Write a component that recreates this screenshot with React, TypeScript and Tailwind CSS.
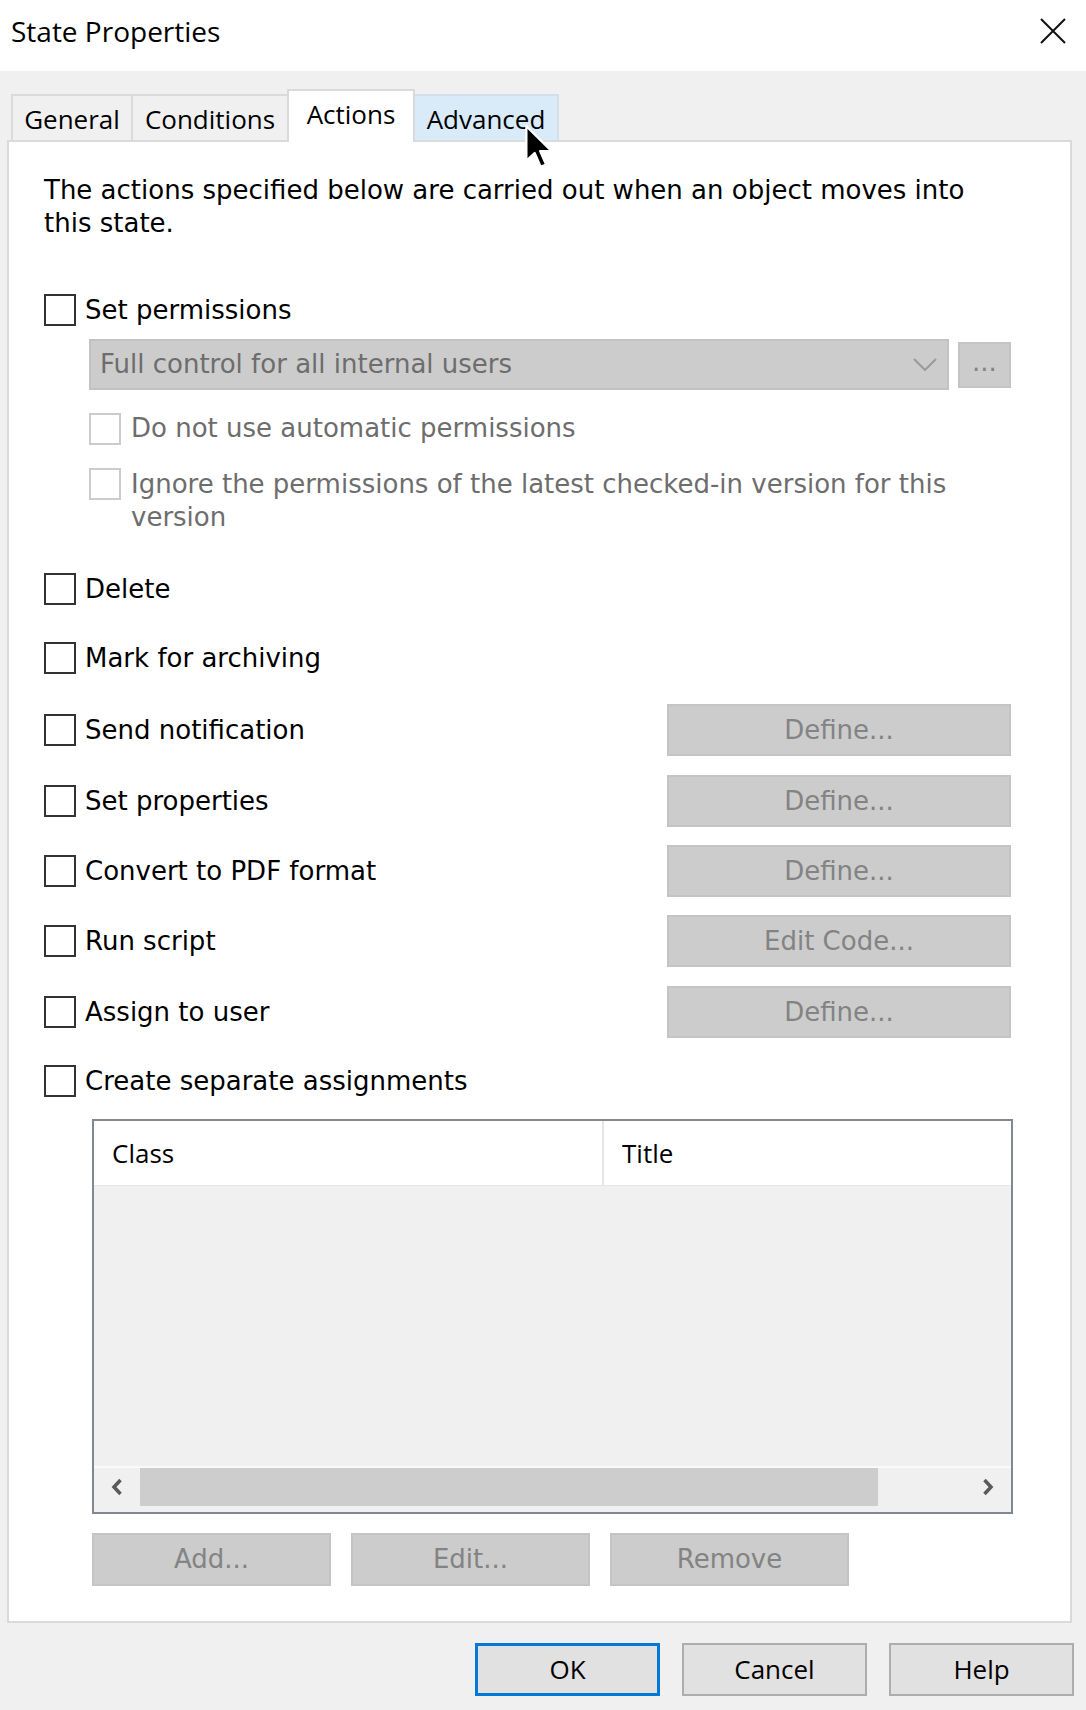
import clsx from "clsx";
import type { ReactNode } from "react";

const ui = "font-['Open_Sans','Noto_Sans',sans-serif]";
const body = "font-['DejaVu_Sans','Liberation_Sans',sans-serif]";

function Checkbox({ disabled = false }: { disabled?: boolean }) {
  return (
    <span
      className={clsx(
        "box-border block size-[32px] shrink-0 border-2 bg-white",
        disabled ? "border-[#cccccc]" : "border-[#333333]",
      )}
    />
  );
}

function DisabledButton({ children, className }: { children: ReactNode; className?: string }) {
  return (
    <div
      className={clsx(
        "box-border flex items-center justify-center border-2 border-[#c4c4c4] bg-[#cccccc] text-[26px] text-[#838383]",
        body,
        className,
      )}
    >
      {children}
    </div>
  );
}

function ActionRow({
  label,
  button,
  className,
}: {
  label: string;
  button?: string;
  className?: string;
}) {
  return (
    <div className={clsx("flex h-[52px] items-center", className)}>
      <Checkbox />
      <span className="ml-[9px] flex-1 text-[26px] text-black">{label}</span>
      {button && <DisabledButton className="h-[52px] w-[344px]">{button}</DisabledButton>}
    </div>
  );
}

function DialogButton({ children, primary = false }: { children: ReactNode; primary?: boolean }) {
  return (
    <div
      className={clsx(
        "box-border flex h-[53px] w-[185px] items-center justify-center bg-[#e1e1e1] text-[26px] text-black",
        ui,
        primary ? "border-[3px] border-[#0078d7]" : "border-2 border-[#adadad]",
      )}
    >
      {children}
    </div>
  );
}

function Chevron({ dir }: { dir: "left" | "right" }) {
  return (
    <svg viewBox="0 0 12 18" className="h-[18px] w-[12px]" fill="none">
      <path
        d={dir === "left" ? "M9.5 2 3 9l6.5 7" : "M2.5 2 9 9l-6.5 7"}
        stroke="#5a5a5a"
        strokeWidth="3.5"
      />
    </svg>
  );
}

export default function App() {
  return (
    <div className={clsx("relative h-[1710px] w-[1086px] overflow-hidden bg-[#f0f0f0]", body)}>
      {/* title bar */}
      <div className="flex h-[71px] items-center justify-between bg-white pb-[9px] pl-[11px] pr-[20px]">
        <span className={clsx("text-[28px] text-black", ui)}>State Properties</span>
        <svg viewBox="0 0 26 26" className="size-[26px]" fill="none">
          <path d="M1 1l24 24M25 1 1 25" stroke="#111" strokeWidth="2" />
        </svg>
      </div>

      <div className="pl-[7px] pr-[14px]">
        {/* tabs */}
        <div className={clsx("flex items-end pl-[4px] pt-[18px] text-[26px] text-black", ui)}>
          <div className="box-border flex h-[46px] w-[122px] items-center justify-center border-2 border-b-0 border-[#dadada] bg-[#f0f0f0] pt-[2px]">
            General
          </div>
          <div className="-ml-[2px] box-border flex h-[46px] w-[158px] items-center justify-center border-2 border-b-0 border-[#dadada] bg-[#f0f0f0] pt-[2px]">
            Conditions
          </div>
          <div className="relative z-10 -mb-[2px] -ml-[2px] box-border flex h-[53px] w-[128px] items-center justify-center border-2 border-b-0 border-[#dadada] bg-white pb-[4px]">
            Actions
          </div>
          <div className="-ml-[2px] box-border flex h-[46px] w-[146px] items-center justify-center border-2 border-b-0 border-[#d3dfea] bg-[#d9eaf9] pt-[2px]">
            Advanced
          </div>
        </div>

        {/* tab panel */}
        <div className="box-border border-2 border-[#dadada] bg-white pb-[35px] pl-[35px] pr-[59px] pt-[32px] text-black">
          <p className="text-[26px] leading-[33px]">
            The actions specified below are carried out when an object moves into
            <br />
            this state.
          </p>

          <div className="mt-[53px] flex h-[34px] items-center">
            <Checkbox />
            <span className="ml-[9px] text-[26px]">Set permissions</span>
          </div>

          <div className="ml-[45px] mt-[12px] flex items-center">
            <div className="box-border flex h-[51px] w-[860px] items-center justify-between border-2 border-[#c2c2c2] bg-[#cccccc] pl-[9px] pr-[10px] text-[26px] text-[#6d6d6d]">
              <span>Full control for all internal users</span>
              <svg viewBox="0 0 24 13" className="h-[13px] w-[24px]" fill="none">
                <path d="M1 1l11 11L23 1" stroke="#9a9a9a" strokeWidth="2" />
              </svg>
            </div>
            <DisabledButton className="ml-[9px] h-[46px] w-[53px] items-end pb-[4px] text-[16px]">
              ...
            </DisabledButton>
          </div>

          <div className="ml-[45px] mt-[19px] flex items-center">
            <Checkbox disabled />
            <span className="ml-[10px] text-[26px] text-[#6d6d6d]">Do not use automatic permissions</span>
          </div>

          <div className="ml-[45px] mt-[20px] flex items-start">
            <Checkbox disabled />
            <span className="ml-[10px] text-[26px] leading-[33px] text-[#6d6d6d]">
              Ignore the permissions of the latest checked-in version for this
              <br />
              version
            </span>
          </div>

          <ActionRow label="Delete" className="mt-[29px]" />
          <ActionRow label="Mark for archiving" className="mt-[17px]" />
          <ActionRow label="Send notification" button="Define..." className="mt-[20px]" />
          <ActionRow label="Set properties" button="Define..." className="mt-[19px]" />
          <ActionRow label="Convert to PDF format" button="Define..." className="mt-[18px]" />
          <ActionRow label="Run script" button="Edit Code..." className="mt-[18px]" />
          <ActionRow label="Assign to user" button="Define..." className="mt-[19px]" />
          <ActionRow label="Create separate assignments" className="mt-[17px]" />

          {/* list view */}
          <div className="ml-[48px] mt-[12px] box-border flex h-[395px] w-[921px] flex-col border-2 border-[#828790] bg-[#f0f0f0]">
            <div className={clsx("flex h-[65px] border-b border-[#e5e5e5] bg-white text-[26px] text-black", ui)}>
              <div className="flex w-[510px] items-center border-r-2 border-[#e5e5e5] pl-[18px]">Class</div>
              <div className="flex flex-1 items-center pl-[18px]">Title</div>
            </div>
            <div className="flex-1" />
            <div className="flex h-[46px] border-t-2 border-[#fafafa]">
              <div className="flex h-[38px] w-[46px] items-center justify-center">
                <Chevron dir="left" />
              </div>
              <div className="h-[38px] w-[738px] bg-[#cdcdcd]" />
              <div className="flex-1" />
              <div className="flex h-[38px] w-[46px] items-center justify-center">
                <Chevron dir="right" />
              </div>
            </div>
          </div>

          <div className="ml-[48px] mt-[19px] flex gap-[20px]">
            <DisabledButton className="h-[53px] w-[239px]">Add...</DisabledButton>
            <DisabledButton className="h-[53px] w-[239px]">Edit...</DisabledButton>
            <DisabledButton className="h-[53px] w-[239px]">Remove</DisabledButton>
          </div>
        </div>

        {/* dialog buttons */}
        <div className="-mr-[2px] mt-[20px] flex justify-end gap-[22px]">
          <DialogButton primary>OK</DialogButton>
          <DialogButton>Cancel</DialogButton>
          <DialogButton>Help</DialogButton>
        </div>
      </div>

      {/* mouse pointer over the Advanced tab */}
      <svg
        viewBox="0 0 13 20"
        className="pointer-events-none absolute left-[524px] top-[124px] z-20 h-[46px] w-[30px]"
      >
        <path
          d="M1 1v15l3.6-3.4 2.6 6 2.4-1-2.6-5.8H12Z"
          fill="#000"
          stroke="#fff"
          strokeWidth="1"
          strokeLinejoin="round"
        />
      </svg>
    </div>
  );
}
